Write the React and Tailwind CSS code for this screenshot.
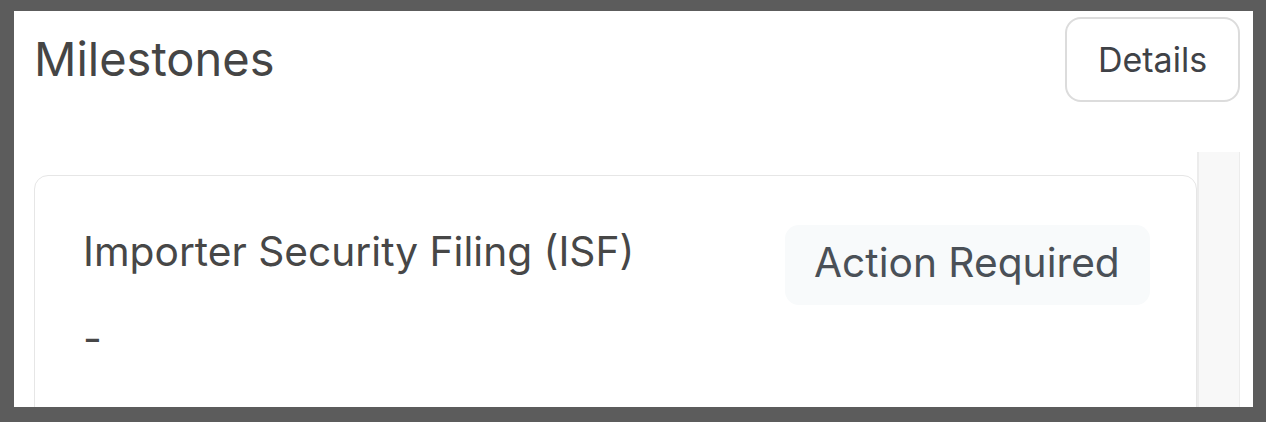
export default function App() {
  return (
    <div
      className="w-[1266px] h-[422px] overflow-hidden bg-[#5c5c5c] pt-[11px] pl-[14px] pr-[13px] pb-[15px]"
      style={{ fontFamily: "Inter, 'Noto Sans', sans-serif" }}
    >
      <div className="h-full bg-white flex flex-col overflow-hidden">
        {/* header */}
        <div className="flex items-start justify-between pl-[20px] pr-[13px] pt-[6px]">
          <h1 className="mt-[18px] text-[47px] leading-none font-normal text-[#454545]">
            Milestones
          </h1>
          <button className="w-[175px] h-[85px] rounded-[16px] border-2 border-[#dcdcdc] text-[34px] leading-none text-[#3f4247] bg-white">
            Details
          </button>
        </div>

        {/* body */}
        <div className="flex mt-[50px] pl-[20px] flex-1 min-h-0">
          <div className="mt-[23px] w-[1163px] h-[260px] shrink-0 rounded-[14px] border border-[#e6e6e6] pt-[49px] pl-[48px] pr-[46px]">
            <div className="flex items-start justify-between">
              <div className="mt-[7px] text-[40.7px] leading-none text-[#474747]">
                Importer Security Filing (ISF)
              </div>
              <div className="h-[80px] w-[365px] pt-[18px] pl-[29px] rounded-[14px] bg-[#f8fafb] text-[40.7px] leading-none text-[#4a5057]">
                Action Required
              </div>
            </div>
            <div className="mt-[13px] text-[41px] leading-none text-[#474747]">-</div>
          </div>
          <div className="w-[43px] shrink-0 border-l-2 border-r border-[#ececec] bg-[#f8f8f8]" />
        </div>
      </div>
    </div>
  );
}
